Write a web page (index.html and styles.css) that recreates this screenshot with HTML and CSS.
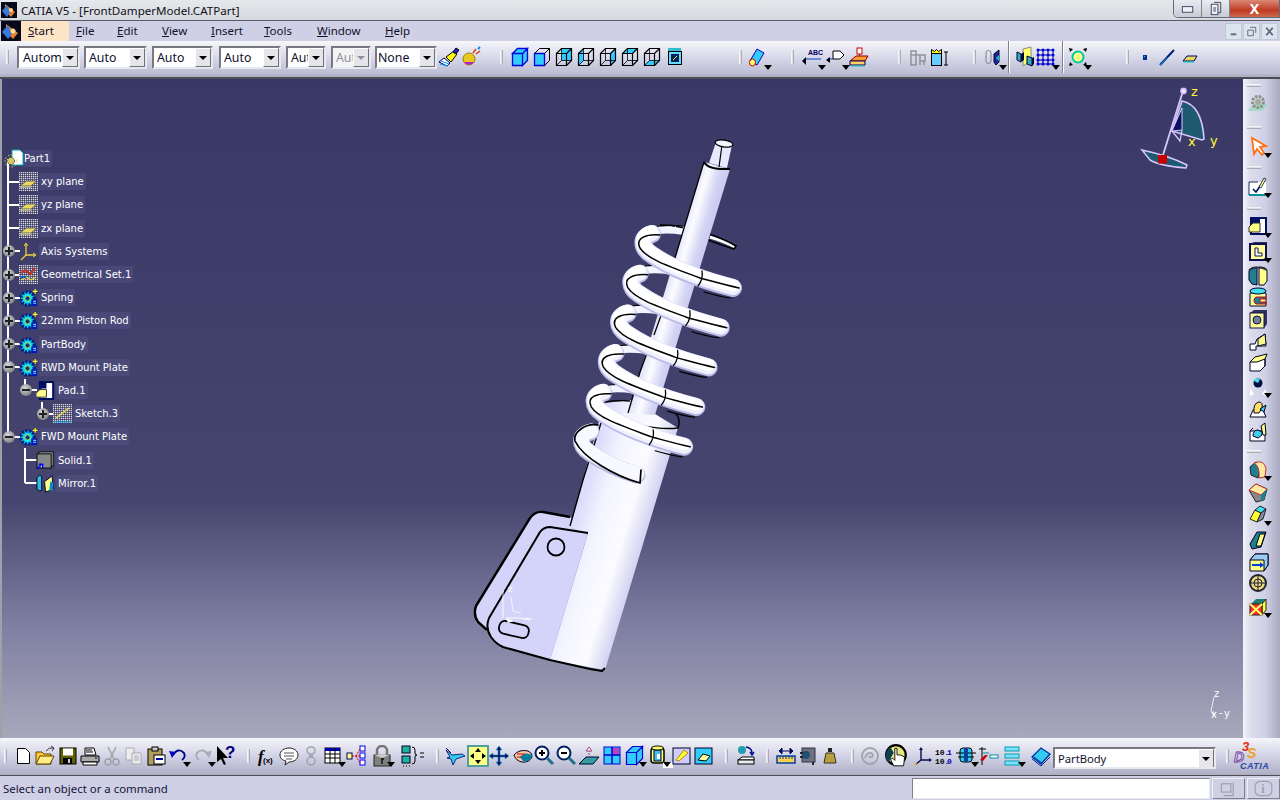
FILE: index.html
```html
<!DOCTYPE html>
<html lang="en">
<head>
<meta charset="utf-8">
<title>CATIA V5</title>
<link rel="stylesheet" href="styles.css">
</head>
<body>
<svg class="defs" aria-hidden="true">
  <defs>
    <pattern id="chk" width="2" height="2" patternUnits="userSpaceOnUse"><rect width="2" height="2" fill="#6c6c84"/><rect width="1" height="1" fill="#d8d8e4"/><rect x="1" y="1" width="1" height="1" fill="#40406a"/></pattern>
    <linearGradient id="gBody" gradientUnits="userSpaceOnUse" x1="575" y1="520" x2="672" y2="549"><stop offset="0" stop-color="#dcdcfc"/><stop offset=".22" stop-color="#f4f4ff"/><stop offset=".5" stop-color="#fbfbff"/><stop offset=".76" stop-color="#c8c8ee"/><stop offset="1" stop-color="#e0e0fc"/></linearGradient>
    <linearGradient id="gRod" gradientUnits="userSpaceOnUse" x1="662" y1="290" x2="690" y2="298"><stop offset="0" stop-color="#dcdcfa"/><stop offset=".4" stop-color="#fcfcff"/><stop offset=".8" stop-color="#d4d4f4"/><stop offset="1" stop-color="#ccccf0"/></linearGradient>
    <radialGradient id="gBall"><stop offset="0" stop-color="#fff"/><stop offset="1" stop-color="#c8a8f0"/></radialGradient>
    <g id="cubew" fill="none" stroke="#000" stroke-width="1.2"><path d="M3.5 7.5h10v12h-10zM3.5 7.5l5-5h10v12l-5 5M13.5 7.5l5-5"/><path d="M8.5 2.5v12h10M8.5 14.5l-5 5" stroke-width=".8"/></g>
    <g id="plane"><rect x="0" y="0" width="19" height="19" fill="url(#chk)"/><path d="M1 14l6-5h11l-6 5z" fill="#e8d860" stroke="#30305a" stroke-width=".7"/><path d="M1 15h11" stroke="#f0f0a0"/></g>
    <g id="gear"><circle cx="9" cy="11" r="7" fill="#00e0f0" stroke="#00208c" stroke-width="3.400" stroke-dasharray="2.400 1.400"/><circle cx="9" cy="11" r="2.800" fill="#004080" stroke="#e8e040"/><rect x="13" y="12" width="6" height="7" fill="#0018c0"/><path d="M15 14h3M15 16h3" stroke="#8ff"/></g>
    <g id="gearp"><use href="#gear"/><path d="M17 1v5M14.500 3.500h5" stroke="#ffff30" stroke-width="1.200"/></g>
    <g id="c1f" fill="none" stroke-linecap="round">
      <path d="M652 233C640 236 641 247 652 254C665 263 690 276 733 287" stroke="#bcbce6" stroke-width="18" transform="translate(0 1)"/>
      <path d="M652 233C640 236 641 247 652 254C665 263 690 276 733 287" stroke="#f0f0ff" stroke-width="16"/>
      <path d="M652 233C640 236 641 247 652 254C665 263 690 276 733 287" stroke="#fff" stroke-width="12" transform="translate(-.5 -1.500)"/>
      <path d="M660 235C646 234 635 238 640 248C647 259 668 266 700 278C715 282 725 285 739 288" stroke="#000" stroke-width="1.500"/>
      <path d="M702 271C703 277 702 281 698 286" stroke="#000" stroke-width="1.300"/>
      <path d="M704 292C714 295 722 297 731 298" stroke="#000" stroke-width="1.200"/>
    </g>
    <g id="c1b" fill="none"><path d="M684 231C670 229 656 229 649 233" stroke="#f4f4ff" stroke-width="8"/><path d="M683 226C670 225 662 225 655 227" stroke="#000" stroke-width="1.200"/></g>
    <symbol id="doc" viewBox="0 0 22 22"><path d="M5.500 3.500h8l4 4v11h-12z" fill="#fff" stroke="#000"/></symbol>
  </defs>
</svg>

<header class="title">
  <svg class="appicon" viewBox="0 0 16 16"><rect width="16" height="16" fill="#08081c"/><path d="M4 2l10 8-4 5-6-6z" fill="#e88030"/><path d="M1 9l5-6 3 8-3 4z" fill="#3878d8"/><circle cx="10" cy="8" r="2" fill="#ffd890"/></svg>
  <span class="title-text">CATIA V5 - [FrontDamperModel.CATPart]</span>
  <div class="winbtns">
    <span class="wb wb-min"><svg viewBox="0 0 28 18" class="wbi"><rect x="8" y="7" width="11" height="6" fill="#eef" stroke="#445" stroke-width="1"/></svg></span>
    <span class="wb wb-max"><svg viewBox="0 0 28 18" class="wbi"><path d="M12 2.500h7v11h-3" fill="none" stroke="#445"/><rect x="9" y="4.500" width="7" height="11" fill="#eef" stroke="#445"/><rect x="11" y="7.500" width="3" height="5" fill="#99a"/></svg></span>
    <span class="wb wb-close">X</span>
  </div>
</header>

<nav class="menu">
  <svg class="menuicon" viewBox="0 0 20 20"><rect width="20" height="20" fill="#08081c"/><path d="M5 3l12 9-5 6-7-7z" fill="#e88030"/><path d="M1 11l6-7 4 9-4 5z" fill="#3878d8"/><circle cx="12" cy="10" r="2.500" fill="#ffd890"/></svg>
  <span class="mi mi-start"><u>S</u>tart</span>
  <span class="mi mi-file"><u>F</u>ile</span>
  <span class="mi mi-edit"><u>E</u>dit</span>
  <span class="mi mi-view"><u>V</u>iew</span>
  <span class="mi mi-insert"><u>I</u>nsert</span>
  <span class="mi mi-tools"><u>T</u>ools</span>
  <span class="mi mi-window"><u>W</u>indow</span>
  <span class="mi mi-help"><u>H</u>elp</span>
  <div class="docbtns">
    <span class="db"><svg viewBox="0 0 16 16"><rect x="5" y="10" width="6" height="2" fill="#667"/></svg></span>
    <span class="db"><svg viewBox="0 0 16 16"><path d="M6.500 3.500h6v6M4 6.500h6v6h-6z" fill="none" stroke="#667"/></svg></span>
    <span class="db"><svg viewBox="0 0 16 16"><path d="M4.500 4l7 8M11.500 4l-7 8" stroke="#667" stroke-width="2"/></svg></span>
  </div>
</nav>

<div class="toolbar top">
  <i class="grip l0"></i>
  <span class="combo c1 l8"><span class="cv">Automatic</span><b class="cb"></b></span>
  <span class="combo c2 l4"><span class="cv">Auto</span><b class="cb"></b></span>
  <span class="combo c3 l5"><span class="cv">Auto</span><b class="cb"></b></span>
  <span class="combo c4 l6"><span class="cv">Auto</span><b class="cb"></b></span>
  <span class="combo c5 l5"><span class="cv">Auto</span><b class="cb"></b></span>
  <span class="combo c6 l5 off"><span class="cv">Auto</span><b class="cb"></b></span>
  <span class="combo c7 l4"><span class="cv">None</span><b class="cb"></b></span>
  <span class="ic l1"><svg viewBox="0 0 22 22"><path d="M1 16l8 4 3-3-6-5z" fill="#fff" stroke="#006"/><path d="M2 18l8 2M3 15l8 3" stroke="#09f"/><path d="M8 11l5 5 6-8-3-3z" fill="#ff0" stroke="#000"/><path d="M15 6l3-4 3 2-3 4z" fill="#22a" stroke="#003"/></svg></span>
  <span class="ic"><svg viewBox="0 0 22 22"><circle cx="9" cy="13" r="6" fill="#e8c820" stroke="#a08000"/><path d="M4 16a6 6 0 0 0 10 0z" fill="#b020d0"/><path d="M13 7l3-4M16 8l4-3" stroke="#d04020" stroke-width="1.500"/><path d="M18 3l2-2" stroke="#08f" stroke-width="2"/></svg></span>
  <i class="grip l18"></i>
  <span class="ic l6"><svg viewBox="0 0 22 22"><path d="M3.500 7.500h10v12h-10zM3.500 7.500l5-5h10l-5 5zM13.500 7.500l5-5v12l-5 5z" fill="#33ccff" stroke="#0000e0" stroke-width="1.300"/></svg></span>
  <span class="ic"><svg viewBox="0 0 22 22"><path d="M3.500 7.500h10v12h-10z" fill="#33ccff" stroke="#0000e0" stroke-width="1.300"/><path d="M3.500 7.500l5-5h10v12l-5 5M13.500 7.500l5-5" fill="none" stroke="#000"/></svg></span>
  <span class="ic"><svg viewBox="0 0 22 22"><rect x="8.500" y="2.500" width="10" height="12" fill="#33ccff"/><use href="#cubew"/></svg></span>
  <span class="ic"><svg viewBox="0 0 22 22"><path d="M3.500 7.500l5-5v12l-5 5z" fill="#33ccff"/><use href="#cubew"/></svg></span>
  <span class="ic"><svg viewBox="0 0 22 22"><path d="M13.500 7.500l5-5v12l-5 5z" fill="#33ccff"/><use href="#cubew"/></svg></span>
  <span class="ic"><svg viewBox="0 0 22 22"><path d="M3.500 7.500l5-5h10l-5 5z" fill="#33ccff"/><use href="#cubew"/></svg></span>
  <span class="ic"><svg viewBox="0 0 22 22"><path d="M3.500 19.500l5-5h10l-5 5z" fill="#33ccff"/><use href="#cubew"/></svg></span>
  <span class="ic"><svg viewBox="0 0 22 22"><rect x="5" y="2" width="13" height="5" fill="#33bbcc"/><rect x="5.500" y="5.500" width="13" height="13" fill="#66ddff" stroke="#000"/><rect x="8" y="8" width="8" height="8" fill="#002060"/><path d="M10 14l4-4" stroke="#ff0"/></svg></span>
  <i class="grip l54"></i>
  <span class="ic arr l5"><svg viewBox="0 0 22 22"><path d="M3 15L10 3l7 4-7 12z" fill="#33ccff" stroke="#0000c0"/><ellipse cx="5.500" cy="16.500" rx="3" ry="3.500" fill="#ffff66" stroke="#c00000"/></svg></span>
  <i class="grip l22"></i>
  <span class="ic arr l7"><svg viewBox="0 0 22 22"><text x="7" y="9" class="abc">ABC</text><path d="M20 13H5" stroke="#0040c0"/><path d="M1 15l4-4v8z" fill="#000"/></svg></span>
  <span class="ic arr l2"><svg viewBox="0 0 22 22"><path d="M8 5h7l4 4-4 4H8z" fill="#fff" stroke="#000"/><path d="M8 13H3" stroke="#0040c0"/><path d="M1 14l4-3v6z" fill="#000"/></svg></span>
  <span class="ic l1"><svg viewBox="0 0 22 22"><rect x="9" y="2" width="5" height="6" fill="#fff" stroke="#c00"/><path d="M11.500 8v6" stroke="#c00"/><path d="M2 15l6-5h12l-3 5z" fill="#ff9933" stroke="#800"/><path d="M2 15h15v4H2z" fill="#ffd060" stroke="#006"/><path d="M3 20h14" stroke="#0cc"/></svg></span>
  <i class="grip l28"></i>
  <span class="ic l6 dim"><svg viewBox="0 0 22 22"><path d="M4 5h5v14H4zM4 9h14v6h-6M13 9v10M17 15v4" fill="none" stroke="#909098" stroke-width="1.500"/></svg></span>
  <span class="ic l-1"><svg viewBox="0 0 22 22"><rect x="3.500" y="7.500" width="10" height="12" fill="#66ccff" stroke="#000"/><path d="M3.500 3.500l3 2 2-2 2 2 3-2v4h-10z" fill="#ff0" stroke="#000"/><path d="M18 6v13M16 6h4M16 19h4" stroke="#000"/></svg></span>
  <i class="grip l23"></i>
  <span class="ic arr l6 dim2"><svg viewBox="0 0 22 22"><path d="M4 7a2.500 2.500 0 0 1 5 0v8a2.500 2.500 0 0 1-5 0z" fill="none" stroke="#808088"/><path d="M12 16V8l5-4v12l-3 3z" fill="#229" stroke="#003"/><path d="M14 12l3-3v6z" fill="#0cc"/></svg></span>
  <i class="vsep l4"></i>
  <span class="ic l4"><svg viewBox="0 0 22 22"><path d="M9 3l8-2v14l-8 5z" fill="#ffff66" stroke="#888"/><path d="M3 6l4 2v8l-4-2zM13 10l5 2v8l-5-2z" fill="#33aacc" stroke="#002"/><path d="M7 8l3-2v8l-3 2zM18 12l2-1v7l-2 2z" fill="#003"/></svg></span>
  <span class="ic arr l-1"><svg viewBox="0 0 22 22"><path d="M3 4h15v14H3zM8 4v14M13 4v14M3 9h15M3 14h15" fill="none" stroke="#0000a0"/><g fill="#0000e0"><circle cx="3" cy="4" r="1.500"/><circle cx="8" cy="4" r="1.500"/><circle cx="13" cy="4" r="1.500"/><circle cx="18" cy="4" r="1.500"/><circle cx="3" cy="9" r="1.500"/><circle cx="8" cy="9" r="1.500"/><circle cx="13" cy="9" r="1.500"/><circle cx="18" cy="9" r="1.500"/><circle cx="3" cy="14" r="1.500"/><circle cx="8" cy="14" r="1.500"/><circle cx="13" cy="14" r="1.500"/><circle cx="18" cy="14" r="1.500"/><circle cx="3" cy="18" r="1.500"/><circle cx="8" cy="18" r="1.500"/><circle cx="13" cy="18" r="1.500"/><circle cx="18" cy="18" r="1.500"/></g></svg></span>
  <i class="vsep l5"></i>
  <span class="ic arr l3"><svg viewBox="0 0 22 22"><circle cx="11" cy="11" r="5.500" fill="#ffff88" stroke="#0c9" stroke-width="2"/><path d="M2 2l4 1-3 3zM20 2l-4 1 3 3zM2 20l4-1-3-3zM20 20l-4-1 3-3z" fill="#000"/></svg></span>
  <i class="grip l37"></i>
  <span class="ic l5"><svg viewBox="0 0 22 22"><rect x="9" y="9" width="4" height="5" fill="#003090"/><rect x="10" y="10" width="1" height="1" fill="#3cf"/></svg></span>
  <span class="ic"><svg viewBox="0 0 22 22"><path d="M4 19L18 4" stroke="#002080" stroke-width="2"/><path d="M4 19l7-7.500" stroke="#09c" stroke-width="1"/></svg></span>
  <span class="ic l1"><svg viewBox="0 0 22 22"><path d="M4 15l4-5h10l-3 5z" fill="#e8d860" stroke="#000060"/><path d="M4 16h11" stroke="#0cc"/></svg></span>
</div>

<main class="main">
  <section class="view">
    <svg class="model" viewBox="0 79 1243 659">
      <g id="backs">
        <use href="#c1b"/>
        <use href="#c1b" transform="translate(-12.200 39.700)"/>
        <use href="#c1b" transform="translate(-24.400 79.400)"/>
        <use href="#c1b" transform="translate(-36.600 119.100)"/>
        <use href="#c1b" transform="translate(-48.800 158.800)"/>
        <use href="#c1b" transform="translate(-61 198.500)"/>
        <path d="M710 237C720 240 728 243 735 247" stroke="#fff" stroke-width="3" fill="none"/>
        <path d="M706 233C718 237 728 241 736 246L734 249C724 246 716 243 708 240" stroke="#000" stroke-width="1.500" fill="none"/>
        <path d="M660 225C668 225 676 226 684 228" stroke="#000" stroke-width="1.500" stroke-dasharray="7 1" fill="none"/>
      </g>
      <path d="M491 609a8 8 0 0 1 6-9l-6 18zM538 533a10 10 0 0 1 10-9l-10 14z" fill="#6a6a90"/>
      <path d="M570 517L543 512Q535 511 530 518L476 606Q474 612 476 622L488 632L560 560L590 530Z" fill="#d4d4fa"/>
      <path d="M570 517L543 512Q535 511 530 518L476 606Q473 615 478 622L487 630" fill="none" stroke="#000" stroke-width="2.400" stroke-linejoin="round"/>
      <path d="M604 403L632 400L678 428L605 670L550 660L588 533L570 527Z" fill="url(#gBody)"/>
      <path d="M588 533L550 527Q544 527 540 532L489 618Q486 628 490 637L503 647L550 660Z" fill="#d4d4fa"/>
      <path d="M588 533L550 527Q544 527 540 532L489 618Q485 628 491 637Q496 644 503 647L550 660L590 669L602 671L605 668" fill="none" stroke="#000" stroke-width="2" stroke-linejoin="round"/>
      <path d="M601 423L583 480M583 480L570 526" stroke="#000" stroke-width="1.400" fill="none"/>
      <path d="M605 402C612 401 622 400 630 401" stroke="#000" stroke-width="1.300" fill="none"/>
      <path d="M603 410C620 425 660 430 678 428C680 422 680 418 676 414" stroke="#000" stroke-width="1.500" fill="none"/>
      <circle cx="556" cy="547" r="8.500" fill="#d4d4fa" stroke="#000" stroke-width="1.800"/>
      <rect x="499" y="623" width="30" height="13" rx="5.500" fill="#d4d4fa" stroke="#000" stroke-width="1.800" transform="rotate(13 514 629)"/>
      <path d="M503 590V618M511 597L513 611L521 613M506 618H520L530 620M524 618L532 619" stroke="#fff" stroke-width=".8" fill="none"/>
      <text x="508" y="592" class="ax-mini">z</text>
      <path d="M506 618l8 3-6 2z" fill="#fff"/>

      <path d="M704 162L730 169L655 415L628 413Z" fill="url(#gRod)"/>
      <path d="M716 142L732 145L727 168L709 163Z" fill="#e8e8ff"/>
      <path d="M722 145L719 167" stroke="#000" stroke-width="1.200"/>
      <ellipse cx="724" cy="143.500" rx="9" ry="3.400" fill="#f4f4ff" stroke="#000" stroke-width="1.300" transform="rotate(8 724 143.500)"/>
      <path d="M704 162L675 258M628 413L640 372M664 307L654 335M650 345L640 372" stroke="#000" stroke-width="1.300" fill="none"/>
      <path d="M704 162Q708 170 730 169" stroke="#000" stroke-width="2" fill="none"/>

      <use href="#c1f"/>
      <use href="#c1f" transform="translate(-12.200 39.700)"/>
      <use href="#c1f" transform="translate(-24.400 79.400)"/>
      <use href="#c1f" transform="translate(-36.600 119.100)"/>
      <use href="#c1f" transform="translate(-48.800 158.800)"/>
      <g fill="none" stroke-linecap="round">
        <path d="M591 431C578 434 579 445 590 452C604 462 620 469 637 474" stroke="#bcbce6" stroke-width="17" transform="translate(0 1)"/>
        <path d="M591 431C578 434 579 445 590 452C604 462 620 469 637 474" stroke="#f8f8ff" stroke-width="15"/>
        <path d="M598 425C584 423 573 433 575 441C583 458 615 476 640 483L641 470" stroke="#000" stroke-width="1.700"/>
      </g>

      <g>
        <path d="M1183 91L1163 155" stroke="#d8c8ff" stroke-width="1.800"/>
        <path d="M1182 101Q1202 105 1204 139L1202 140L1172 131Z" fill="#1e5a70" stroke="#d8c8ff" stroke-width="1.600"/>
        <path d="M1182 108L1172 131L1182 130Z" fill="#101060" stroke="#d8c8ff" stroke-width="1"/>
        <path d="M1172 131L1180 141L1182 130" fill="none" stroke="#d8c8ff" stroke-width="1.300"/>
        <path d="M1142 150Q1170 156 1187 165L1186 168Q1160 166 1150 160Z" fill="#1e5a70" stroke="#d8c8ff" stroke-width="1.500"/>
        <circle cx="1183.500" cy="91" r="3.400" fill="url(#gBall)"/>
        <rect x="1158" y="155" width="9" height="8.500" fill="#c80000"/>
        <text x="1191" y="96" class="ax-y">z</text>
        <text x="1188" y="146" class="ax-y">x</text>
        <text x="1210" y="145" class="ax-y">y</text>
      </g>
      <g>
        <path d="M1214 697L1211 711L1214 716M1213 711L1215 715" stroke="#fff" fill="none" stroke-width=".8"/>
        <text x="1214" y="697" class="ax-w">z</text>
        <text x="1211" y="718" class="ax-w">x</text>
        <text x="1219" y="716" class="ax-w">-</text>
        <text x="1224" y="717" class="ax-w">y</text>
      </g>
    </svg>

    <div class="tree">
      <div class="row r-root"><i class="ln v8 lower"></i><svg class="ti ti-root" viewBox="0 0 20 20"><path d="M8 1h8l3 3v12H8z" fill="#fff" stroke="#0ab"/><circle cx="7" cy="12" r="3.500" fill="#d8c860" stroke="#444" stroke-dasharray="1.500 1"/><circle cx="7" cy="12" r="6" fill="none" stroke="#e8d860" stroke-dasharray="1.500 2"/></svg><span class="lb">Part1</span></div>
      <div class="row"><i class="ln v8"></i><i class="ln h8"></i><svg class="ti" viewBox="0 0 19 19"><use href="#plane"/></svg><span class="lb">xy plane</span></div>
      <div class="row"><i class="ln v8"></i><i class="ln h8"></i><svg class="ti" viewBox="0 0 19 19"><use href="#plane"/></svg><span class="lb">yz plane</span></div>
      <div class="row"><i class="ln v8"></i><i class="ln h8"></i><svg class="ti" viewBox="0 0 19 19"><use href="#plane"/></svg><span class="lb">zx plane</span></div>
      <div class="row"><i class="ln v8"></i><i class="ln h8"></i><i class="tog plus"></i><svg class="ti" viewBox="0 0 19 19"><path d="M7 2v11M7 13h9M7 13L2 18" stroke="#e8d040" fill="none" stroke-width="1.300"/><path d="M5 4l2-3 2 3M14 11l3 2-3 2" stroke="#e8d040" fill="none"/></svg><span class="lb">Axis Systems</span></div>
      <div class="row"><i class="ln v8"></i><i class="ln h8"></i><i class="tog plus"></i><svg class="ti" viewBox="0 0 19 19"><rect width="19" height="19" fill="url(#chk)"/><path d="M2 8l4-3 5 4 5-6" stroke="#c03020" fill="none" stroke-width="2"/><path d="M3 15l4-3 5 3 5-3" stroke="#e8d040" fill="none" stroke-width="1.300"/><path d="M2 12h5" stroke="#06c" stroke-width="2"/></svg><span class="lb">Geometrical Set.1</span></div>
      <div class="row"><i class="ln v8"></i><i class="ln h8"></i><i class="tog plus"></i><svg class="ti" viewBox="0 0 20 20"><use href="#gearp"/></svg><span class="lb">Spring</span></div>
      <div class="row"><i class="ln v8"></i><i class="ln h8"></i><i class="tog plus"></i><svg class="ti" viewBox="0 0 20 20"><use href="#gearp"/></svg><span class="lb">22mm Piston Rod</span></div>
      <div class="row"><i class="ln v8"></i><i class="ln h8"></i><i class="tog plus"></i><svg class="ti" viewBox="0 0 20 20"><use href="#gear"/></svg><span class="lb">PartBody</span></div>
      <div class="row"><i class="ln v8"></i><i class="ln h8"></i><i class="tog minus"></i><svg class="ti" viewBox="0 0 20 20"><use href="#gearp"/></svg><span class="lb">RWD Mount Plate</span></div>
      <div class="row lv1"><i class="ln v8"></i><i class="ln v25 half up"></i><i class="ln h25"></i><i class="tog minus t2"></i><svg class="ti" viewBox="0 0 20 20"><path d="M4 1h14v18H4z" fill="#fff" stroke="#001060" stroke-width="2"/><path d="M3 1h8v7H6l-3 3z" fill="#001060"/><path d="M0 13l4-4h7v8H0z" fill="#ffff88" stroke="#303040"/></svg><span class="lb">Pad.1</span></div>
      <div class="row lv2"><i class="ln v8"></i><i class="ln v42 half up"></i><i class="ln h42"></i><i class="tog plus t3"></i><svg class="ti" viewBox="0 0 19 19"><rect width="19" height="19" fill="url(#chk)"/><path d="M3 14L16 4" stroke="#e8e040" stroke-width="1.500"/><path d="M1 18h17" stroke="#0af"/></svg><span class="lb">Sketch.3</span></div>
      <div class="row"><i class="ln v8 half up"></i><i class="ln h8"></i><i class="tog minus"></i><svg class="ti" viewBox="0 0 20 20"><use href="#gearp"/></svg><span class="lb">FWD Mount Plate</span></div>
      <div class="row lv1"><i class="ln v25"></i><i class="ln h25"></i><svg class="ti" viewBox="0 0 20 20"><rect x="3" y="1" width="15" height="15" fill="#ccc" stroke="#111" stroke-width="1.200"/><rect x="1" y="3" width="15" height="15" fill="#888" stroke="#111" stroke-width="1.200"/><path d="M1 19l5-5M3 14h4v4" stroke="#00f" stroke-width="1.500" fill="#fff"/></svg><span class="lb">Solid.1</span></div>
      <div class="row lv1"><i class="ln v25 half up"></i><i class="ln h25"></i><svg class="ti" viewBox="0 0 20 20"><path d="M1 4l3-3 2 2v14l-2 1-3-2z" fill="#33bbdd" stroke="#003"/><path d="M9 8l8-6 1 14-8 3z" fill="#ffff88" stroke="#003"/><path d="M15 8l3 1v8l-4 1z" fill="#0090c0"/></svg><span class="lb">Mirror.1</span></div>
    </div>
  </section>

  <aside class="right">
    <i class="hgrip t5"></i>
    <span class="ic t5"><svg viewBox="0 0 22 22"><path d="M1 19l5-7h15l-5 7z" fill="#a8d8cc"/><circle cx="11" cy="10" r="5.500" fill="none" stroke="#8a9088" stroke-width="3" stroke-dasharray="2.500 1.200"/><circle cx="11" cy="10" r="3" fill="#a8a898"/></svg></span>
    <i class="hgrip t12"></i>
    <span class="ic arr t7"><svg viewBox="0 0 22 22"><path d="M5 2l2 16 3-5 5 6 2-2-4-6 6-1z" fill="#fff" stroke="#ff7010" stroke-width="1.800"/></svg></span>
    <i class="hgrip t8"></i>
    <span class="ic arr t7"><svg viewBox="0 0 22 22"><rect x="2" y="6" width="17" height="13" fill="#fff"/><path d="M2 19h17" stroke="#0090a0" stroke-width="2"/><path d="M2 6h9M2 6v13" stroke="#203060"/><path d="M6 13l3 3 9-13" fill="none" stroke="#001060" stroke-width="1.600"/><path d="M12 11l5-9 2 1-5 9z" fill="#ffff66" stroke="#001060" stroke-width=".8"/></svg></span>
    <i class="hgrip t9"></i>
    <span class="ic arr t6"><svg viewBox="0 0 22 22"><path d="M4 2h15v16H4z" fill="#fff" stroke="#001060" stroke-width="2"/><path d="M4 2h9v6H8l-4 4z" fill="#001060"/><path d="M2 11l4-4h7v9H2z" fill="#ffff88" stroke="#333"/></svg></span>
    <span class="ic arr t3"><svg viewBox="0 0 22 22"><rect x="3" y="3" width="16" height="16" fill="#ffff99" stroke="#101050" stroke-width="2"/><path d="M3 3l4-2h13v15l-1 3" fill="#303060"/><rect x="3" y="3" width="16" height="16" fill="#ffff99" stroke="#101050" stroke-width="2"/><path d="M8 7v8h7v-3h-4V7z" fill="#fff" stroke="#101050"/></svg></span>
    <span class="ic t2"><svg viewBox="0 0 22 22"><path d="M2 6q1-4 8-4v18L5 19 2 15z" fill="#208090" stroke="#003"/><path d="M12 2q8 0 8 4v10l-3 4h-5z" fill="#ffff88" stroke="#003"/><path d="M2 5q9-5 18 0" fill="none" stroke="#334" stroke-width="2"/></svg></span>
    <span class="ic t-1"><svg viewBox="0 0 22 22"><path d="M3 7h16v13H3z" fill="#ffff99" stroke="#003"/><ellipse cx="11" cy="5" rx="8" ry="3" fill="#44ddee" stroke="#003"/><path d="M9 11a4 4 0 0 0 0 7h10v-2h-6v-3h6v-2z" fill="#208090" stroke="#c00"/></svg></span>
    <span class="ic"><svg viewBox="0 0 22 22"><path d="M3 5l4-3h13v14l-3 4z" fill="#303060"/><rect x="3" y="5" width="14" height="15" fill="#ffff99" stroke="#101050"/><circle cx="10" cy="12" r="4" fill="#708090" stroke="#101050"/></svg></span>
    <span class="ic t1"><svg viewBox="0 0 22 22"><path d="M3 19v-6h5l2-5 8-5 1 12H9v4z" fill="#fff" stroke="#002"/><path d="M11 8l7-5 1 10-8 2z" fill="#ffff88" stroke="#002"/></svg></span>
    <span class="ic t-1"><svg viewBox="0 0 22 22"><path d="M3 19V10l5-3h10v7l-5 5z" fill="#fff" stroke="#002"/><path d="M3 10l5-5 12-3-2 5-8 3z" fill="#ffff88" stroke="#002"/><path d="M18 7v7" stroke="#002"/></svg></span>
    <span class="ic arr t2"><svg viewBox="0 0 22 22"><path d="M3 13h1l3 5-4 2zM19 13l-1 1-3 4 4 2z" fill="#fff"/><circle cx="11" cy="7" r="4.500" fill="#001040"/><path d="M7 5a4 3 0 0 1 6-2l-2 4z" fill="#40e0f0"/></svg></span>
    <span class="ic"><svg viewBox="0 0 22 22"><path d="M3 19h16l-3-7H6z" fill="#fff" stroke="#002"/><path d="M7 15q-1-10 5-11 4 0 3 6l-3 5z" fill="#ffe060" stroke="#002"/><path d="M13 11l6-4-2 7z" fill="#44ccee" stroke="#002"/></svg></span>
    <span class="ic t1"><svg viewBox="0 0 22 22"><path d="M3 10h15v10H3z" fill="#fff" stroke="#002"/><path d="M3 10l3-3M18 2l1 12h-3l-2-9z" fill="#ffff88" stroke="#002"/><path d="M6 15q0-6 5-6l4 2v3l-4 3z" fill="#44ccee" stroke="#002"/></svg></span>
    <i class="hgrip t7"></i>
    <span class="ic arr t6"><svg viewBox="0 0 22 22"><path d="M3 8l6-5 5 2-3 14-7-3z" fill="#208090" stroke="#222"/><path d="M8 4q8-4 11 5l-1 9-6 1q1-12-5-15z" fill="#ffe8a0" stroke="#c03030"/></svg></span>
    <span class="ic t1"><svg viewBox="0 0 22 22"><path d="M2 8l7-6 11 5-3 11-8 2z" fill="#888" stroke="#222"/><path d="M2 8l7-6 11 5-6 6z" fill="#ffe8a0" stroke="#c03030"/><path d="M14 13l6-6-3 11-3 1z" fill="#208090"/></svg></span>
    <span class="ic arr"><svg viewBox="0 0 22 22"><path d="M3 15l5-9 6 3-4 9z" fill="#ffff33" stroke="#222"/><path d="M8 6l5-4 6 3-5 4z" fill="#44ddf0" stroke="#222"/><path d="M14 9l5-4-3 10-6 3z" fill="#8090a0" stroke="#222"/></svg></span>
    <span class="ic t3"><svg viewBox="0 0 22 22"><path d="M3 15L10 3h9l-5 15-9 2z" fill="#208090" stroke="#002"/><path d="M9 17l4-12h5l-4 12z" fill="#ffff88" stroke="#002"/></svg></span>
    <span class="ic"><svg viewBox="0 0 22 22"><path d="M3 9l5-6h13v11l-4 6H3z" fill="#ffff88" stroke="#002"/><path d="M8 3h13v11l-4 6V9H3z" fill="#99ccee" stroke="#002"/><path d="M5 14h11" stroke="#0040e0" stroke-width="2"/><path d="M13 11l4 3-4 3z" fill="#0040e0"/></svg></span>
    <span class="ic t-1"><svg viewBox="0 0 22 22"><circle cx="11" cy="11" r="8" fill="#e8d880" stroke="#223" stroke-width="2"/><path d="M11 3v16M3 11h16" stroke="#223"/><circle cx="11" cy="11" r="4" fill="none" stroke="#223"/></svg></span>
    <span class="ic arr t2"><svg viewBox="0 0 22 22"><path d="M4 8l5-5h10l-4 5z" fill="#208070"/><path d="M15 8l4-5v11l-4 5z" fill="#ffff44" stroke="#222"/><rect x="3" y="8" width="12" height="11" fill="#ff3030" stroke="#222"/><path d="M3 8l12 11M15 8L3 19" stroke="#ffff60" stroke-width="2"/></svg></span>
  </aside>
</main>

<div class="toolbar bottom">
  <i class="grip"></i>
  <span class="ic l5"><svg viewBox="0 0 22 22"><use href="#doc"/></svg></span>
  <span class="ic"><svg viewBox="0 0 22 22"><path d="M2 7h6l2 2h7v10H2z" fill="#ffcc33" stroke="#604000"/><path d="M2 19l4-8h14l-4 8z" fill="#ffee88" stroke="#604000"/><path d="M12 6q3-4 7-3M17 1l3 2-2 3" fill="none" stroke="#333"/></svg></span>
  <span class="ic l1"><svg viewBox="0 0 22 22"><rect x="3" y="3" width="16" height="16" fill="#606000" stroke="#000"/><rect x="6" y="3.500" width="10" height="7" fill="#fff"/><rect x="6" y="13" width="9" height="6" fill="#000"/><rect x="11" y="14" width="2" height="4" fill="#ccc"/></svg></span>
  <span class="ic"><svg viewBox="0 0 22 22"><path d="M6 3h9l2 7H6z" fill="#fff" stroke="#000"/><path d="M2 11h18v6H2z" fill="#aaa" stroke="#000"/><path d="M4 17h14v3H4z" fill="#fff" stroke="#000"/><path d="M7 5h6M7 7h7M16 13h2" stroke="#000"/></svg></span>
  <span class="ic dim"><svg viewBox="0 0 22 22"><path d="M7 2l6 12M15 2L9 14" stroke="#a0a0a8" stroke-width="1.500"/><circle cx="7" cy="17" r="3" fill="none" stroke="#a0a0a8" stroke-width="1.500"/><circle cx="15" cy="17" r="3" fill="none" stroke="#a0a0a8" stroke-width="1.500"/></svg></span>
  <span class="ic dim"><svg viewBox="0 0 22 22"><path d="M3 3h8v12H3z" fill="#eee" stroke="#a8a8b0"/><path d="M9 8h9v11H9z" fill="#eee" stroke="#a8a8b0"/><path d="M11 11h5M11 13h5M11 15h5" stroke="#a8a8b0"/></svg></span>
  <span class="ic"><svg viewBox="0 0 22 22"><rect x="3" y="4" width="14" height="16" fill="#b0a060" stroke="#000"/><rect x="7" y="2" width="6" height="4" fill="#ccc" stroke="#000"/><rect x="9" y="10" width="11" height="9" fill="#fff" stroke="#000"/><rect x="11" y="13" width="7" height="2" fill="#00a"/></svg></span>
  <span class="ic arr"><svg viewBox="0 0 22 22"><path d="M6 10q5-8 11-2 2 4-2 7" fill="none" stroke="#000080" stroke-width="1.800"/><path d="M2 6l7 1-4 6z" fill="#0000c0"/></svg></span>
  <span class="ic arr l3 dim"><svg viewBox="0 0 22 22"><path d="M16 10q-5-8-11-2-2 4 2 7" fill="none" stroke="#a8a8b0" stroke-width="1.800"/><path d="M20 6l-7 1 4 6z" fill="#a8a8b0"/></svg></span>
  <span class="ic l1"><svg viewBox="0 0 22 22"><path d="M2 1v16l4-3 3 6 2-1-3-6h5z" fill="#000"/><text x="10" y="13" class="help">?</text></svg></span>
  <i class="grip l10"></i>
  <span class="ic l6"><svg viewBox="0 0 22 22"><text x="2" y="17" class="fx">f</text><text x="7" y="18" class="fx2">(x)</text></svg></span>
  <span class="ic"><svg viewBox="0 0 22 22"><path d="M11 3c5 0 9 3 9 7s-4 7-9 7l-4 3 1-4c-4-1-6-3-6-6 0-4 4-7 9-7z" fill="#fff" stroke="#222"/><path d="M6 8h10M6 11h10M8 14h6" stroke="#555"/></svg></span>
  <span class="ic dim"><svg viewBox="0 0 22 22"><rect x="7" y="2" width="8" height="7" rx="3.500" fill="none" stroke="#a0a0a8" stroke-width="1.500"/><rect x="9" y="10" width="4" height="2" fill="#a0a0a8"/><circle cx="11" cy="16" r="4" fill="none" stroke="#a0a0a8" stroke-width="1.500"/></svg></span>
  <span class="ic arr"><svg viewBox="0 0 22 22"><rect x="3" y="3" width="15" height="15" fill="#fff" stroke="#000"/><rect x="3" y="3" width="15" height="3" fill="#0000c0"/><path d="M3 9h15M3 13h15M8 3v15M13 3v15" stroke="#000"/></svg></span>
  <span class="ic l2"><svg viewBox="0 0 22 22"><rect x="1" y="8" width="5" height="6" fill="#ff8" stroke="#006"/><rect x="14" y="1" width="5" height="5" fill="#fff" stroke="#00e"/><rect x="14" y="8" width="5" height="5" fill="#fff" stroke="#00e"/><rect x="14" y="15" width="5" height="5" fill="#fff" stroke="#00e"/><path d="M6 11h8M10 11l4-7M10 11l4 7" stroke="#c00" stroke-dasharray="2 1"/></svg></span>
  <span class="ic arr wide l3"><svg viewBox="0 0 22 22"><path d="M6 10V6a5 5 0 0 1 10 0v4" fill="none" stroke="#777" stroke-width="2.500"/><rect x="3" y="10" width="16" height="11" fill="#808080" stroke="#222"/><path d="M3 10l8-1 8 1-8 3z" fill="#ccc"/><path d="M11 13v6M10 14h3" stroke="#111" stroke-width="1.500"/></svg></span>
  <span class="ic wide2 l5"><svg viewBox="0 0 28 22"><rect x="4" y="1" width="8" height="7" fill="#20b0a0" stroke="#002"/><rect x="4" y="11" width="8" height="7" fill="#20b0a0" stroke="#002"/><path d="M5 21h1M8 21h1M11 21h1" stroke="#000"/><path d="M14 2q3 0 3 3v3q0 2 2 2-2 0-2 2v4q0 3-3 3" fill="none" stroke="#000"/><path d="M22 8h4M22 12h4" stroke="#000"/></svg></span>
  <i class="grip l10"></i>
  <span class="ic l5"><svg viewBox="0 0 22 22"><path d="M2 5l6 5 10-1 3 2-9 3-3 6-2-6-4-1 3-1z" fill="#33ccee" stroke="#006" stroke-width=".8"/><path d="M2 3l5 5" stroke="#006"/></svg></span>
  <span class="ic l1"><svg viewBox="0 0 22 22"><rect x="1" y="1" width="20" height="20" fill="#ffff88" stroke="#50a0a0" stroke-width="2"/><path d="M11 3l3 4h-6zM11 19l3-4h-6zM3 11l4-3v6zM19 11l-4-3v6z" fill="#000"/></svg></span>
  <span class="ic l-1"><svg viewBox="0 0 22 22"><path d="M11 1l3 4h-2v5h5V8l4 3-4 3v-2h-5v5h2l-3 4-3-4h2v-5H5v2l-4-3 4-3v2h5V5H8z" fill="#001060" stroke="#30a0d0" stroke-width=".6"/></svg></span>
  <span class="ic l2"><svg viewBox="0 0 22 22"><path d="M2 10q5-6 14-4 5 2 4 6-3 6-10 5-6-1-8-7z" fill="#ffc8a8" stroke="#002"/><path d="M8 12q5-6 12-2-2 8-9 6z" fill="#0080a0"/><path d="M5 9h8M5 12h4" stroke="#c00"/></svg></span>
  <span class="ic l-1"><svg viewBox="0 0 22 22"><circle cx="9" cy="8" r="6.500" fill="#fff" stroke="#002060" stroke-width="2"/><path d="M6 8h6M9 5v6" stroke="#000" stroke-width="2"/><path d="M14 13l6 6" stroke="#207090" stroke-width="3"/></svg></span>
  <span class="ic"><svg viewBox="0 0 22 22"><circle cx="9" cy="8" r="6.500" fill="#fff" stroke="#002060" stroke-width="2"/><path d="M6 8h6" stroke="#000" stroke-width="2"/><path d="M14 13l6 6" stroke="#207090" stroke-width="3"/></svg></span>
  <span class="ic l1"><svg viewBox="0 0 22 22"><path d="M1 19l7-7h13l-6 7z" fill="#30a0a0" stroke="#003"/><path d="M11 16V3" stroke="#a04080" stroke-dasharray="2 1"/><path d="M8 6l3-4 3 4z" fill="#fff" stroke="#a04080"/></svg></span>
  <span class="ic l1"><svg viewBox="0 0 22 22"><rect x="3" y="2" width="16" height="17" fill="#33ccff" stroke="#0000d0"/><rect x="11" y="3" width="7" height="7" fill="#c040c0"/><path d="M11 2v17M3 10h16" stroke="#0000d0" stroke-width="1.500"/></svg></span>
  <span class="ic arr"><svg viewBox="0 0 22 22"><path d="M3.500 7.500h10v12h-10zM3.500 7.500l6-6h10l-6 6zM13.500 7.500l6-6v12l-6 6z" fill="#33ccff" stroke="#0000d0" stroke-width="1.200"/></svg></span>
  <span class="ic arr inv l2"><svg viewBox="0 0 22 22"><rect x="4" y="3" width="13" height="15" rx="3" fill="#ffff66" stroke="#000" stroke-width="1.500"/><rect x="7" y="5" width="7" height="11" fill="#44bbee" stroke="#004"/><path d="M10 9h3v5h-3z" fill="#fff"/><ellipse cx="10.500" cy="3" rx="6" ry="2" fill="#ffff66" stroke="#000"/></svg></span>
  <span class="ic l2"><svg viewBox="0 0 22 22"><rect x="2" y="3" width="17" height="16" fill="#ccf" stroke="#002"/><path d="M5 15l8-10 4 3-9 8z" fill="#ffff33" stroke="#c08000"/></svg></span>
  <span class="ic"><svg viewBox="0 0 22 22"><rect x="2" y="3" width="17" height="16" fill="#33ccff" stroke="#002"/><path d="M5 15l5-6 7 2-4 5z" fill="#ffffa0" stroke="#000"/></svg></span>
  <i class="grip l10"></i>
  <span class="ic l7"><svg viewBox="0 0 22 22"><circle cx="7" cy="5" r="4" fill="#20a0b0"/><path d="M11 2q6 1 6 6M15 7l2 3 2-3" fill="none" stroke="#000a90" stroke-width="1.400"/><path d="M3 15l4-3h12v3z" fill="#fff" stroke="#000"/><rect x="3" y="15" width="16" height="4" fill="#eee" stroke="#000"/></svg></span>
  <i class="grip l9"></i>
  <span class="ic l6"><svg viewBox="0 0 22 22"><path d="M4 6h14M4 6l3-3v6zM18 6l-3-3v6z" fill="#000a60" stroke="#000a60"/><rect x="2" y="11" width="18" height="7" fill="#ffd050" stroke="#0040a0" stroke-width="1.500"/><path d="M5 11v3M8 11v3M11 11v3M14 11v3M17 11v3" stroke="#0040a0"/></svg></span>
  <span class="ic"><svg viewBox="0 0 22 22"><rect x="5" y="3" width="13" height="14" fill="#707080" stroke="#334"/><circle cx="9" cy="10" r="4" fill="#205070"/><path d="M3 8h3M3 12h3M16 17v3" stroke="#223" stroke-width="2"/></svg></span>
  <span class="ic"><svg viewBox="0 0 22 22"><rect x="9" y="3" width="4" height="4" fill="#222"/><path d="M7 8h8l2 10H5z" fill="#b8a040" stroke="#332"/></svg></span>
  <i class="grip l10"></i>
  <span class="ic l5 dim"><svg viewBox="0 0 22 22"><circle cx="11" cy="11" r="8" fill="none" stroke="#a0a0a8" stroke-width="1.800"/><path d="M6 13q2-6 6-5 3 1 1 4-2 1-3-1" fill="none" stroke="#a0a0a8" stroke-width="1.800"/></svg></span>
  <span class="ic big l5"><svg viewBox="0 0 22 22"><circle cx="10" cy="10" r="9" fill="#e8e880" stroke="#000" stroke-width="2"/><path d="M3 17a9 9 0 0 1 2-14l3 5z" fill="#104050"/><path d="M8 20l-3-6 2-1 2 2V4h2v6h3l4 2-1 8z" fill="#fff" stroke="#000" stroke-width=".8"/></svg></span>
  <span class="ic l3"><svg viewBox="0 0 22 22"><path d="M10 4v11H19M10 15L4 20" fill="none" stroke="#0a0a50" stroke-width="1.400"/><path d="M8 5l2-3 2 3zM18 13l3 2-3 2z" fill="#0a0a50"/><path d="M3 19l3-1-1 3z" fill="#fc0"/></svg></span>
  <span class="ic l-1"><svg viewBox="0 0 22 22"><text x="3" y="10" class="num">10.</text><text x="15" y="10" class="num blue">1</text><text x="3" y="19" class="num">10.</text><text x="15" y="19" class="num blue">0</text></svg></span>
  <span class="ic arr l1"><svg viewBox="0 0 22 22"><rect x="5" y="3" width="12" height="14" rx="3" fill="#33ccee" stroke="#000"/><path d="M1 8h20M3 12h16" stroke="#000"/><rect x="9" y="3" width="4" height="14" fill="#0a40a0"/></svg></span>
  <span class="ic"><svg viewBox="0 0 22 22"><path d="M5 2v18M2 4h7" stroke="#000"/><path d="M3 15l5-5 3 0-5 6z" fill="#c00"/><rect x="13" y="10" width="8" height="3" fill="#fff" stroke="#0090a0"/><path d="M6 8h6" stroke="#0090a0"/></svg></span>
  <span class="ic arr l3"><svg viewBox="0 0 22 22"><rect x="3" y="2" width="14" height="4" fill="#80e0ff" stroke="#00a0b0"/><rect x="3" y="9" width="14" height="4" fill="#80e0ff" stroke="#00a0b0"/><rect x="3" y="16" width="14" height="4" fill="#80e0ff" stroke="#00a0b0"/></svg></span>
  <span class="ic l6"><svg viewBox="0 0 22 22"><path d="M2 12l9-9 9 6-9 10z" fill="#33ccee" stroke="#002fa0" stroke-width="1.300"/><path d="M2 14l9 7 9-9M4 12l8 6" fill="none" stroke="#002fa0"/></svg></span>
  <span class="combo c8 l1"><span class="cv">PartBody</span><b class="cb"></b></span>
  <i class="grip l10"></i>
  <svg class="logo l4" viewBox="0 0 40 36"><text x="9" y="13" class="lg3">3</text><text x="1" y="24" class="lgd">D</text><text x="14" y="20" class="lgs">S</text><text x="7" y="31" class="lgc">CATIA</text></svg>
</div>

<footer class="status">
  <span class="status-text">Select an object or a command</span>
  <span class="status-input"></span>
  <span class="sbtn sb1"><svg viewBox="0 0 18 16"><rect x="3" y="4" width="8" height="7" fill="none" stroke="#a0a0b0"/><path d="M13 3v11H5" fill="none" stroke="#a0a0b0"/></svg></span>
  <span class="sbtn"><svg viewBox="0 0 18 16"><rect x="2" y="2" width="14" height="12" rx="4" fill="none" stroke="#a0a0b0"/><text x="7" y="12" class="info">i</text></svg></span>
</footer>
</body>
</html>
```
FILE: styles.css
```css
* { box-sizing: border-box; }
html, body { margin: 0; padding: 0; }
body {
  width: 1280px;
  height: 800px;
  overflow: hidden;
  display: flex;
  flex-direction: column;
  font-family: "Noto Sans", "Liberation Sans", sans-serif;
  font-size: 12px;
  color: #10102a;
  background: #cfd0e5;
}
.defs { position: absolute; width: 0; height: 0; }

/* title */
.title {
  height: 21px;
  flex: none;
  display: flex;
  align-items: center;
  position: relative;
  background: linear-gradient(#e6e8ec, #d6d9df);
  border-bottom: 1px solid #5c5c68;
}
.appicon { width: 16px; height: 16px; margin-left: 1px; }
.title-text { margin-left: 4px; color: #101018; font-size: 11.6px; }
.winbtns {
  position: absolute;
  right: 0;
  top: 0;
  height: 18px;
  display: flex;
  border: 1px solid #666a78;
  border-top: 0;
  border-radius: 0 0 0 5px;
  overflow: hidden;
}
.wb { height: 17px; display: block; background: linear-gradient(#e8ebf0, #c8ccd6); border-right: 1px solid #80848f; }
.wb-min { width: 28px; }
.wb-max { width: 28px; }
.wb-close {
  width: 49px;
  border-right: 0;
  background: linear-gradient(#d98a78, #c03a22 60%, #cc6a50);
  color: #fff;
  font-weight: 700;
  font-size: 14px;
  line-height: 17px;
  text-align: center;
}
.wbi { width: 28px; height: 17px; display: block; }

/* menu */
.menu {
  height: 20px;
  flex: none;
  display: flex;
  align-items: center;
  background: #cfd0e5;
  font-size: 11.5px;
}
.menuicon { width: 20px; height: 20px; margin-left: 1px; flex: none; }
.mi { color: #10102a; line-height: 20px; }
.mi-start { background: #fde4c4; width: 48px; padding-left: 7px; height: 20px; }
.mi-file { margin-left: 7px; width: 41px; }
.mi-edit { width: 45px; }
.mi-view { width: 49px; }
.mi-insert { width: 53px; }
.mi-tools { width: 53px; }
.mi-window { width: 68px; }
.docbtns { position: absolute; right: 2px; top: 23px; display: flex; gap: 1px; }
.db { width: 17px; height: 17px; background: #dbe5f0; border: 1px solid #c0c8d8; display: block; }
.db svg { display: block; width: 15px; height: 15px; }

/* toolbars */
.toolbar { flex: none; display: flex; align-items: center; }
.toolbar.top {
  height: 38px;
  padding: 0 0 4px 6px;
  background: linear-gradient(#f6f6fb 0, #eaeaf3 18%, #d2d2e6 55%, #bcbcd2 92%, #b0b0c4 94%);
  border-bottom: 2px solid #4c4c56;
}
.toolbar.bottom {
  height: 38px;
  padding: 0 0 2px 4px;
  background: linear-gradient(#f6f6fb 0, #eaeaf3 15%, #d2d2e6 50%, #b4b4ca 92%, #b0b0c4 96%);
  border-bottom: 1px solid #4c4c56;
}
.grip {
  flex: none;
  display: block;
  width: 3px;
  height: 14px;
  background: linear-gradient(90deg, #fff, #d8d8e0 60%, #8c8c9c);
}
.vsep { flex: none; display: block; width: 2px; height: 32px; background: linear-gradient(90deg, #80808c 50%, #fff 50%); }
.ic { flex: none; display: block; width: 22px; height: 22px; position: relative; }
.ic svg { display: block; width: 22px; height: 22px; }
.ic.arr::after {
  content: "";
  position: absolute;
  right: -3px;
  bottom: -2px;
  border-left: 4px solid transparent;
  border-right: 4px solid transparent;
  border-top: 5px solid #000;
}
.right .ic.arr::after { right: -3px; bottom: 0; }
.bottom .ic.arr::after { right: -2px; bottom: 0; }
.ic.inv::before {
  content: "";
  position: absolute;
  right: -4px;
  bottom: -1px;
  width: 10px;
  height: 6px;
  background: #fff;
}
.ic.wide2 { width: 28px; }
.ic.wide2 svg { width: 28px; }
.ic.big svg { width: 24px; height: 24px; margin: -1px; }
.dim { opacity: .95; }

.l-1 { margin-left: -1px; }
.l0 { margin-left: 0; }
.l1 { margin-left: 1px; }
.l2 { margin-left: 2px; }
.l3 { margin-left: 3px; }
.l4 { margin-left: 4px; }
.l5 { margin-left: 5px; }
.l6 { margin-left: 6px; }
.l7 { margin-left: 7px; }
.l8 { margin-left: 8px; }
.l9 { margin-left: 9px; }
.l10 { margin-left: 10px; }
.l18 { margin-left: 18px; }
.l22 { margin-left: 22px; }
.l23 { margin-left: 23px; }
.l28 { margin-left: 28px; }
.l37 { margin-left: 37px; }
.l54 { margin-left: 54px; }

/* combos */
.combo {
  flex: none;
  display: flex;
  align-items: center;
  height: 23px;
  background: #fff;
  border: 2px solid;
  border-color: #787880 #e8e8f0 #e8e8f0 #787880;
  position: relative;
  overflow: hidden;
  font-size: 12.3px;
}
.cv { flex: 1; min-width: 0; overflow: hidden; white-space: nowrap; padding-left: 3px; color: #101030; }
.c1 .cv { padding-left: 4px; }
.c7 .cv { padding-left: 1px; }
.cb {
  flex: none;
  width: 16px;
  height: 19px;
  background: #e6e6ea;
  border: 1px solid;
  border-color: #fff #707078 #707078 #fff;
  position: relative;
}
.cb::after {
  content: "";
  position: absolute;
  left: 3px;
  top: 7px;
  border-left: 4px solid transparent;
  border-right: 4px solid transparent;
  border-top: 4px solid #000;
}
.c1, .c2 { width: 63px; }
.c3 { width: 61px; }
.c4, .c7 { width: 62px; }
.c5, .c6 { width: 40px; }
.c8 { width: 163px; height: 22px; margin-top: 5px; font-size: 11.2px; }
.off { background: #f4f4f4; }
.off .cv { color: #909098; }
.off .cb::after { border-top-color: #909098; }

/* main */
.main { flex: none; height: 659px; display: flex; }
.view {
  flex: none;
  width: 1243px;
  position: relative;
  background: linear-gradient(#3a3866 0, #45456f 64%, #7c7ca0 82%, #a8a8bc 100%);
  border-left: 2px solid #a0a0a8;
}
.model { position: absolute; left: -2px; top: 0; width: 1243px; height: 659px; display: block; }
.right {
  flex: none;
  width: 37px;
  display: flex;
  flex-direction: column;
  align-items: flex-start;
  padding-left: 4px;
  background: linear-gradient(90deg, #f4f4fa 0, #dcdcec 20%, #d0d0e6 60%, #a8a8c0 100%);
}
.hgrip { display: block; width: 14px; height: 3px; background: linear-gradient(#fff, #d8d8e0 60%, #8c8c9c); margin-left: 0; flex: none; }
.t-1 { margin-top: -1px; }
.t1 { margin-top: 1px; }
.t2 { margin-top: 2px; }
.t3 { margin-top: 3px; }
.t5 { margin-top: 5px; }
.t6 { margin-top: 6px; }
.t7 { margin-top: 7px; }
.t8 { margin-top: 8px; }
.t9 { margin-top: 9px; }
.t12 { margin-top: 12px; }

/* tree */
.tree {
  position: absolute;
  left: -2px;
  top: 68px;
  font-family: "DejaVu Sans", sans-serif;
  font-size: 10px;
  color: #fff;
}
.row {
  height: 23.2px;
  width: 200px;
  position: relative;
  display: flex;
  align-items: center;
  padding-left: 19px;
}
.row.lv1 { padding-left: 36px; }
.row.lv2 { padding-left: 53px; }
.r-root { padding-left: 4px; }
.ti { width: 19px; height: 19px; flex: none; position: relative; display: block; }
.ti-root { width: 20px; height: 20px; }
.lb { margin-left: 1px; padding: 1px 2px; background: rgba(92, 92, 150, .32); border-radius: 2px; line-height: 15px; white-space: nowrap; }
.r-root .lb { margin-left: -2px; }
.ln { position: absolute; background: #fff; display: block; }
.v8, .v25, .v42 { width: 2px; top: 0; bottom: 0; }
.v8 { left: 7px; }
.v25 { left: 24px; }
.v42 { left: 41px; }
.half.up { bottom: 50%; }
.lower { top: 50%; }
.h8, .h25, .h42 { height: 2px; top: 50%; margin-top: -1px; }
.h8 { left: 8px; width: 12px; }
.h25 { left: 25px; width: 12px; }
.h42 { left: 42px; width: 12px; }
.tog {
  position: absolute;
  left: 3px;
  top: 50%;
  margin-top: -6px;
  width: 12px;
  height: 12px;
  border-radius: 50%;
  background: radial-gradient(circle at 40% 35%, #d8d8d8, #707074 90%);
  display: block;
}
.tog.t2 { left: 20px; }
.tog.t3 { left: 37px; }
.tog::before { content: ""; position: absolute; left: 2px; right: 2px; top: 5px; height: 2px; background: #202028; }
.tog.plus::after { content: ""; position: absolute; top: 2px; bottom: 2px; left: 5px; width: 2px; background: #202028; }

/* status */
.status { flex: none; height: 24px; display: flex; align-items: center; background: #cfd0e5; position: relative; padding-left: 3px; }
.status-text { width: 910px; color: #14143a; font-size: 11.4px; }
.status-input { width: 298px; height: 21px; background: #fff; border: 1px solid; border-color: #808088 #e8e8f0 #e8e8f0 #808088; }
.sbtn { width: 33px; height: 21px; margin-left: 2px; background: #d0d0e4; border: 1px solid; border-color: #f0f0f8 #80808c #80808c #f0f0f8; display: block; }
.sb1 { margin-left: 2px; }
.sbtn svg { display: block; width: 31px; height: 19px; }

/* svg text */
.abc { font: 700 7px "Liberation Sans Narrow", "Liberation Sans", sans-serif; fill: #000060; }
.help { font: 700 17px "Liberation Sans", sans-serif; fill: #000080; }
.fx { font: italic 700 17px "Liberation Serif", serif; fill: #000; }
.fx2 { font: 700 8px "Liberation Sans", sans-serif; fill: #000; }
.num { font: 700 8px "Liberation Mono", monospace; fill: #000; }
.num.blue { fill: #0000c0; }
.info { font: 700 10px "Liberation Serif", serif; fill: #a0a0b0; }
.ax-y { font: 13px "DejaVu Sans", sans-serif; fill: #ffff30; }
.ax-w { font: 10px "DejaVu Sans", sans-serif; fill: #fff; }
.ax-mini { font: 9px "DejaVu Sans", sans-serif; fill: #fff; }
.logo { flex: none; width: 40px; height: 36px; display: block; }
.lg3 { font: italic 700 13px "Liberation Sans", sans-serif; fill: #e03020; }
.lgd { font: italic 700 14px "Liberation Sans", sans-serif; fill: none; stroke: #6a3aa0; stroke-width: .8; }
.lgs { font: italic 700 14px "Liberation Sans", sans-serif; fill: #f0a020; }
.lgc { font: italic 700 9px "Liberation Sans", sans-serif; fill: #2a4aa8; letter-spacing: .5px; }
```
